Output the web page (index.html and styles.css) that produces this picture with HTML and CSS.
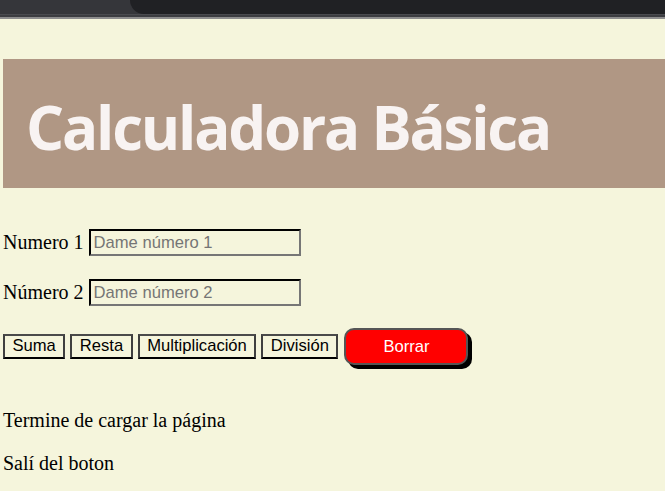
FILE: index.html
```html
<!DOCTYPE html>
<html lang="es">
<head>
<meta charset="utf-8">
<title>Calculadora Básica</title>
<link rel="stylesheet" href="styles.css">
</head>
<body>
<div class="chrome">
  <div class="chrome-left"></div>
  <div class="chrome-tab"></div>
</div>
<div class="chrome-line"></div>
<main class="page">
  <header class="banner">
    <h1 class="title">Calculadora Básica</h1>
  </header>
  <div class="form">
    <div class="row">
      <label class="label" for="n1">Numero 1</label>
      <input class="field" id="n1" type="text" placeholder="Dame número 1">
    </div>
    <div class="row">
      <label class="label" for="n2">Número 2</label>
      <input class="field" id="n2" type="text" placeholder="Dame número 2">
    </div>
    <div class="buttons">
      <button class="btn">Suma</button>
      <button class="btn">Resta</button>
      <button class="btn">Multiplicación</button>
      <button class="btn">División</button>
      <button class="btn-clear">Borrar</button>
    </div>
  </div>
  <div class="log">
    <p class="msg">Termine de cargar la página</p>
    <p class="msg">Salí del boton</p>
  </div>
</main>
</body>
</html>
```
FILE: styles.css
```css
* { box-sizing: border-box; }
html, body { margin: 0; padding: 0; }
body {
  background: #f5f5dc;
  font-family: "Liberation Serif", "Times New Roman", serif;
  font-size: 20px;
  color: #000;
  height: 491px;
  overflow: hidden;
}
.chrome {
  display: flex;
  height: 14px;
  background: #35363a;
}
.chrome-left { width: 130px; }
.chrome-tab {
  flex: 1;
  background: #202124;
  border-bottom-left-radius: 14px;
}
.chrome-line {
  height: 5px;
  background: #3c3d41;
  border-bottom: 2px solid #8e8e8e;
  border-top: 1px solid #4a4b4f;
}
.page {
  padding: 40px 0 0 3px;
}
.banner {
  background: #b09784;
  height: 129px;
  display: flex;
  align-items: center;
  padding-left: 23px;
}
.title {
  margin: 0;
  font-family: "Open Sans", "Noto Sans", sans-serif;
  font-weight: 700;
  font-size: 60px;
  letter-spacing: -2.2px;
  color: #f8f3f2;
  line-height: 1;
  padding-top: 6px;
}
.form {
  display: flex;
  flex-direction: column;
  gap: 23px;
  margin-top: 41px;
}
.row {
  display: flex;
  align-items: center;
  gap: 5px;
  height: 27px;
}
.label { line-height: 27px; }
.field {
  width: 212px;
  height: 27px;
  margin: 0;
  padding: 1px 3px;
  background: #f5f5dc;
  border: 2px inset #767676;
  border-top-color: #1f1f1f;
  border-left-color: #1f1f1f;
  border-bottom-color: #767676;
  border-right-color: #767676;
  font-family: "Liberation Sans", Arial, sans-serif;
  font-size: 16.6px;
  color: #000;
}
.field::placeholder { color: #757575; }
.buttons {
  display: flex;
  align-items: center;
  gap: 5px;
  margin-top: -1px;
}
.btn {
  height: 25px;
  margin: 0;
  padding: 0 7.5px;
  background: transparent;
  border: 2px solid #3f3f3f;
  border-top-color: #4a4a4a;
  border-bottom-color: #000;
  font-family: "Liberation Sans", Arial, sans-serif;
  font-size: 16.6px;
  color: #000;
  line-height: 1;
}
.btn-clear {
  width: 124px;
  height: 37px;
  margin: 0 0 0 1px;
  background: #ff0000;
  color: #fff;
  border: 2px solid #555;
  border-radius: 10px;
  box-shadow: 4px 4px 0 #000;
  font-family: "Liberation Sans", Arial, sans-serif;
  font-size: 16.6px;
}
.log {
  margin-top: 44px;
  display: flex;
  flex-direction: column;
  gap: 20px;
}
.msg {
  margin: 0;
  line-height: 23px;
}
```
